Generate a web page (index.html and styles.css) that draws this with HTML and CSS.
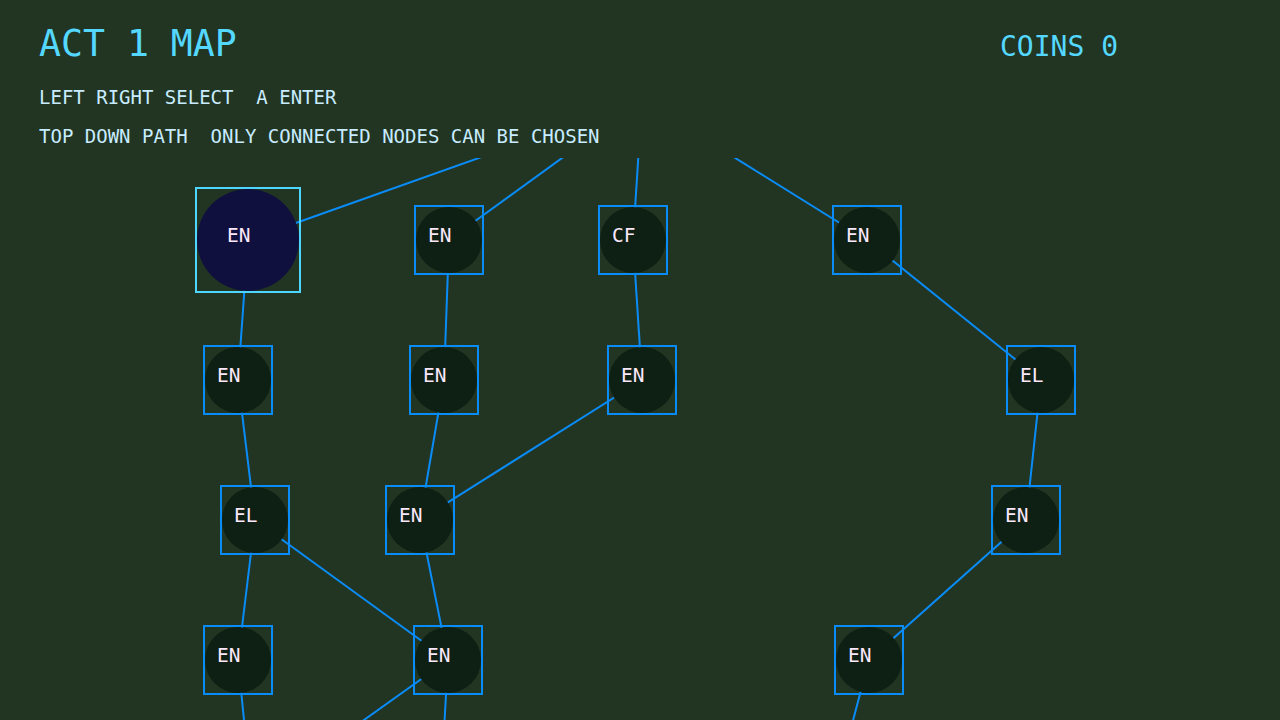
FILE: index.html
```html
<!DOCTYPE html>
<html lang="en">

<head>
    <meta charset="UTF-8">
    <meta name="viewport" content="width=device-width, initial-scale=1.0">
    <title>Act 1 Map</title>
    <link rel="stylesheet" href="styles.css">
</head>

<body>
    <div class="screen">
        <!-- header -->
        <div class="top-bar">
            <h1 class="title">ACT 1 MAP</h1>
            <div class="coins">COINS 0</div>
        </div>
        <div class="help">
            <p>LEFT RIGHT SELECT  A ENTER</p>
            <p>TOP DOWN PATH  ONLY CONNECTED NODES CAN BE CHOSEN</p>
        </div>

        <!-- map canvas -->
        <div class="map">
            <svg class="paths" width="1280" height="562" viewBox="0 0 1280 562">
                <g stroke="#0a8cf8" stroke-width="2" fill="none">
                    <!-- start node to first row -->
                    <line x1="642" y1="-58" x2="248" y2="82" />
                    <line x1="642" y1="-58" x2="449" y2="82" />
                    <line x1="642" y1="-58" x2="633" y2="82" />
                    <line x1="642" y1="-58" x2="867" y2="82" />
                    <!-- row 1 to row 2 -->
                    <line x1="248" y1="82" x2="238" y2="222" />
                    <line x1="449" y1="82" x2="444" y2="222" />
                    <line x1="633" y1="82" x2="642" y2="222" />
                    <line x1="867" y1="82" x2="1041" y2="222" />
                    <!-- row 2 to row 3 -->
                    <line x1="238" y1="222" x2="255" y2="362" />
                    <line x1="444" y1="222" x2="420" y2="362" />
                    <line x1="642" y1="222" x2="420" y2="362" />
                    <line x1="1041" y1="222" x2="1026" y2="362" />
                    <!-- row 3 to row 4 -->
                    <line x1="255" y1="362" x2="238" y2="502" />
                    <line x1="255" y1="362" x2="448" y2="502" />
                    <line x1="420" y1="362" x2="448" y2="502" />
                    <line x1="1026" y1="362" x2="869" y2="502" />
                    <!-- row 4 to row 5 -->
                    <line x1="238" y1="502" x2="252" y2="642" />
                    <line x1="448" y1="502" x2="252" y2="642" />
                    <line x1="448" y1="502" x2="440" y2="642" />
                    <line x1="869" y1="502" x2="832" y2="642" />
                </g>
            </svg>

            <div class="node current" style="left:195px; top:29px"><span class="dot"></span><span class="label">EN</span></div>
            <div class="node" style="left:414px; top:47px"><span class="dot"></span><span class="label">EN</span></div>
            <div class="node" style="left:598px; top:47px"><span class="dot"></span><span class="label">CF</span></div>
            <div class="node" style="left:832px; top:47px"><span class="dot"></span><span class="label">EN</span></div>

            <div class="node" style="left:203px; top:187px"><span class="dot"></span><span class="label">EN</span></div>
            <div class="node" style="left:409px; top:187px"><span class="dot"></span><span class="label">EN</span></div>
            <div class="node" style="left:607px; top:187px"><span class="dot"></span><span class="label">EN</span></div>
            <div class="node" style="left:1006px; top:187px"><span class="dot"></span><span class="label">EL</span></div>

            <div class="node" style="left:220px; top:327px"><span class="dot"></span><span class="label">EL</span></div>
            <div class="node" style="left:385px; top:327px"><span class="dot"></span><span class="label">EN</span></div>
            <div class="node" style="left:991px; top:327px"><span class="dot"></span><span class="label">EN</span></div>

            <div class="node" style="left:203px; top:467px"><span class="dot"></span><span class="label">EN</span></div>
            <div class="node" style="left:413px; top:467px"><span class="dot"></span><span class="label">EN</span></div>
            <div class="node" style="left:834px; top:467px"><span class="dot"></span><span class="label">EN</span></div>
        </div>
    </div>
</body>

</html>
```

FILE: styles.css
```css
body {
    margin: 0;
    background-color: #223522;
    font-family: "DejaVu Sans Mono", "Liberation Mono", monospace;
    overflow: hidden;
}

.screen {
    width: 1280px;
    height: 720px;
    position: relative;
    overflow: hidden;
}

.top-bar {
    display: flex;
    justify-content: space-between;
    align-items: baseline;
    padding: 26px 162px 0 39px;
}

.title {
    margin: 0;
    font-size: 36.5px;
    font-weight: normal;
    line-height: 36px;
    color: #55d8ff;
}

.coins {
    font-size: 28px;
    line-height: 28px;
    color: #55d8ff;
}

.help {
    margin-top: 16px;
    padding-left: 39px;
}

.help p {
    margin: 0;
    font-size: 19px;
    line-height: 39px;
    color: #c8ecff;
    white-space: pre;
}

/* map canvas, clipped under the help text */
.map {
    position: absolute;
    left: 0;
    top: 158px;
    width: 1280px;
    height: 562px;
    overflow: hidden;
}

.paths {
    position: absolute;
    left: 0;
    top: 0;
}

.node {
    position: absolute;
    width: 70px;
    height: 70px;
    box-sizing: border-box;
    border: 2px solid #0a8cf8;
}

.node .dot {
    position: absolute;
    inset: 0;
    border-radius: 50%;
    background-color: #0e1f13;
}

.node .label {
    position: absolute;
    left: calc(50% - 21px);
    top: calc(50% - 14px);
    font-size: 19.5px;
    line-height: 19px;
    color: #fbe8fb;
}

/* the node the cursor is on */
.node.current {
    width: 106px;
    height: 106px;
    border-color: #4fd6ff;
}

.node.current .dot {
    background-color: #10103e;
}
```
